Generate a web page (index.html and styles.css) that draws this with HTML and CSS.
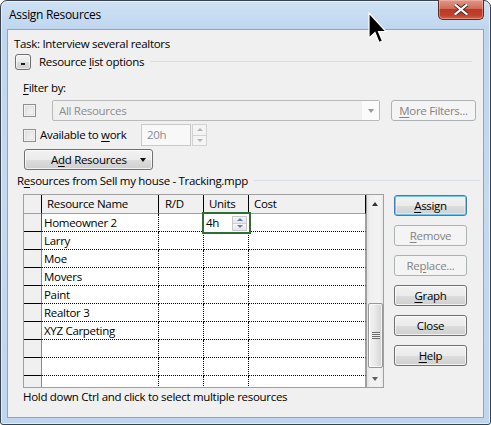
FILE: index.html
```html
<!DOCTYPE html>
<html>
<head>
<meta charset="utf-8">
<link rel="stylesheet" href="styles.css">
</head>
<body>
<div class="window">
  <div class="titlebar">
    <span class="title">Assign Resources</span>
    <div class="close-btn">
      <svg width="14" height="11" viewBox="0 0 14 11"><path d="M1.5 1 L12.5 10 M12.5 1 L1.5 10" stroke="#4a2320" stroke-width="4" stroke-linecap="square"/><path d="M1.5 1 L12.5 10 M12.5 1 L1.5 10" stroke="#ffffff" stroke-width="2.2" stroke-linecap="square"/></svg>
    </div>
  </div>
  <div class="client">
    <div class="task">Task: Interview several realtors</div>
    <div class="options-row">
      <span class="collapse-btn"><span class="minus"></span></span>
      <span class="options-label">Resource <u>l</u>ist options</span>
      <span class="rule"></span>
    </div>
    <div class="filter-label"><u>F</u>ilter by:</div>
    <div class="filter-row">
      <span class="checkbox"></span>
      <div class="combo"><span class="combo-text">All Resources</span><span class="combo-drop"><span class="tri-down gray"></span></span></div>
      <div class="btn disabled more-btn"><u>M</u>ore Filters...</div>
    </div>
    <div class="avail-row">
      <span class="checkbox"></span>
      <span class="avail-label">Available to <u>w</u>ork</span>
      <div class="spin-input">20h</div>
      <div class="spin-buttons"><span class="spin-half"><span class="tri-up light"></span></span><span class="spin-half"><span class="tri-down light"></span></span></div>
    </div>
    <div class="btn add-btn"><span class="add-text">A<u>d</u>d Resources</span><span class="tri-down dark"></span></div>
    <div class="resources-row"><span>R<u>e</u>sources from Sell my house - Tracking.mpp</span><span class="rule"></span></div>
    <div class="main-row">
      <div class="grid">
        <div class="sheet">
          <div class="row head">
            <div class="c rh"></div><div class="c name">Resource Name</div><div class="c rd">R/D</div><div class="c units">Units</div><div class="c cost">Cost</div>
          </div>
          <div class="row selected"><div class="c rh"></div><div class="c name">Homeowner 2</div><div class="c rd"></div><div class="c units"></div><div class="c cost"></div></div>
          <div class="row"><div class="c rh"></div><div class="c name">Larry</div><div class="c rd"></div><div class="c units"></div><div class="c cost"></div></div>
          <div class="row"><div class="c rh"></div><div class="c name">Moe</div><div class="c rd"></div><div class="c units"></div><div class="c cost"></div></div>
          <div class="row"><div class="c rh"></div><div class="c name">Movers</div><div class="c rd"></div><div class="c units"></div><div class="c cost"></div></div>
          <div class="row"><div class="c rh"></div><div class="c name">Paint</div><div class="c rd"></div><div class="c units"></div><div class="c cost"></div></div>
          <div class="row"><div class="c rh"></div><div class="c name">Realtor 3</div><div class="c rd"></div><div class="c units"></div><div class="c cost"></div></div>
          <div class="row"><div class="c rh"></div><div class="c name">XYZ Carpeting</div><div class="c rd"></div><div class="c units"></div><div class="c cost"></div></div>
          <div class="row"><div class="c rh"></div><div class="c name"></div><div class="c rd"></div><div class="c units"></div><div class="c cost"></div></div>
          <div class="row"><div class="c rh"></div><div class="c name"></div><div class="c rd"></div><div class="c units"></div><div class="c cost"></div></div>
          <div class="row"><div class="c rh"></div><div class="c name"></div><div class="c rd"></div><div class="c units"></div><div class="c cost"></div></div>
          <div class="cell-editor">
            <span class="editor-text">4h</span>
            <span class="editor-spin"><span class="es-half"><span class="tri-up blue"></span></span><span class="es-half"><span class="tri-down blue"></span></span></span>
          </div>
        </div>
        <div class="vscroll">
          <div class="sb-btn"><span class="tri-up dark"></span></div>
          <div class="sb-track"><div class="thumb"><span class="grip"></span></div></div>
          <div class="sb-btn"><span class="tri-down mid"></span></div>
        </div>
      </div>
      <div class="side-buttons">
        <div class="btn default"><u>A</u>ssign</div>
        <div class="btn disabled"><u>R</u>emove</div>
        <div class="btn disabled">Re<u>p</u>lace...</div>
        <div class="btn"><u>G</u>raph</div>
        <div class="btn">Close</div>
        <div class="btn"><u>H</u>elp</div>
      </div>
    </div>
    <div class="hint">Hold down Ctrl and click to select multiple resources</div>
  </div>
  <svg class="cursor" width="19" height="32" viewBox="0 0 19 32"><path d="M1 1 L1 26 L7 20.5 L11 30.5 L14.5 29 L10.5 19.5 L18 19.5 Z" fill="#000" stroke="#fff" stroke-width="1.2" stroke-linejoin="miter"/></svg>
</div>
</body>
</html>
```
FILE: styles.css
```css
* { box-sizing: border-box; }
html, body { margin: 0; padding: 0; }
body {
  width: 491px; height: 425px; overflow: hidden;
  font-family: "Open Sans", "Noto Sans", sans-serif;
  font-size: 11.5px; letter-spacing: -0.3px; color: #000; background: #fff;
}
u { text-decoration: underline; text-underline-offset: 2px; }

.window {
  position: relative;
  width: 491px; height: 425px;
  border: 1px solid #39424d;
  border-radius: 7px 7px 3px 3px;
  background: linear-gradient(to bottom, #cfe1f4 0px, #bed6ef 30px, #c4daf1 200px, #bfd6ef 425px);
  padding: 0 6px 6px 6px;
  display: flex; flex-direction: column;
  box-shadow: inset 0 0 0 1px rgba(255,255,255,0.55);
}
.titlebar {
  height: 28px; display: flex; align-items: flex-start;
}
.title { padding: 6px 0 0 2px; line-height: 16px; color: #000; font-size: 12px; }
.close-btn {
  margin-left: auto; margin-top: -1px;
  width: 46px; height: 20px;
  border: 1px solid #5a2a24; border-top: none;
  border-radius: 0 0 5px 5px;
  background: linear-gradient(to bottom, #e0998a 0%, #d06a56 45%, #bb3a25 50%, #c0402b 80%, #d26549 100%);
  box-shadow: inset 0 0 0 1px rgba(255,200,190,0.45);
  display: flex; align-items: center; justify-content: center;
}
.client {
  flex: 1;
  border: 1px solid #8fa4bd;
  background: #f0f0f0;
  padding: 0 6px;
  display: flex; flex-direction: column; align-items: flex-start;
}
.task { margin-top: 6px; line-height: 16px; }
.options-row {
  margin-top: 2px; height: 16px; width: 100%;
  display: flex; align-items: center;
}
.collapse-btn {
  margin-left: 1px; width: 16px; height: 16px;
  border: 1px solid #707070; border-radius: 3px;
  background: linear-gradient(to bottom, #f2f2f2 0%, #ebebeb 50%, #dddddd 51%, #cfcfcf 100%);
  box-shadow: inset 0 0 0 1px rgba(255,255,255,0.6);
  display: flex; justify-content: center; align-items: flex-end;
  padding-bottom: 4px;
}
.minus { width: 4px; height: 2px; background: #1e1e1e; }
.options-label { margin-left: 8px; line-height: 16px; white-space: nowrap; }
.rule { flex: 1; height: 1px; background: #d5dfe5; margin: 0 0 0 6px; }
.options-row .rule { margin-top: -2px; margin-right: 5px; }

.filter-label { margin: 10px 0 0 9px; line-height: 16px; }
.filter-row { margin: 4px 0 0 9px; display: flex; align-items: center; height: 21px; }
.checkbox {
  width: 13px; height: 13px; border: 1px solid #8e8f8f;
  background: linear-gradient(135deg, #dcdcdc, #fafafa);
  box-shadow: inset 0 0 0 1px #f3f3f3, inset 0 0 0 2px #e2e2e2;
  flex: none;
}
.combo {
  margin-left: 16px; width: 328px; height: 21px;
  border: 1px solid #b9b9b9; border-radius: 2px;
  background: #f0f0f0;
  display: flex; align-items: center;
}
.combo-text { padding-left: 6px; color: #8d8d8d; flex: 1; line-height: 16px; }
.combo-drop {
  width: 17px; height: 19px; background: #fbfbfb;
  display: flex; align-items: center; justify-content: center;
}
.btn {
  width: 74px; height: 21px;
  border: 1px solid #707070; border-radius: 3px;
  background: linear-gradient(to bottom, #f2f2f2 0%, #ebebeb 50%, #dddddd 51%, #cfcfcf 100%);
  box-shadow: inset 0 0 0 1px rgba(255,255,255,0.7);
  display: flex; align-items: center; justify-content: center;
  line-height: 16px; white-space: nowrap;
}
.btn.disabled {
  border-color: #adb2b5; background: #f4f4f4; color: #838383; box-shadow: none;
}
.btn.default {
  border-color: #3c7fb1;
  background: linear-gradient(to bottom, #f2f2f2 0%, #ebebeb 50%, #dddddd 51%, #cfcfcf 100%);
  box-shadow: inset 0 0 0 1px #6fc7f0, inset 0 0 0 2px rgba(255,255,255,0.4);
}
.more-btn { margin-left: 11px; width: 85px; }

.avail-row { margin: 3px 0 0 9px; display: flex; align-items: center; height: 22px; }
.avail-label { margin-left: 4px; width: 101px; line-height: 16px; white-space: nowrap; }
.spin-input {
  width: 50px; height: 22px; border: 1px solid #c9c9c9; background: #f8f8f8;
  color: #8d8d8d; padding-left: 5px; line-height: 20px;
}
.spin-buttons { margin-left: 1px; width: 15px; height: 22px; display: flex; flex-direction: column; }
.spin-half {
  flex: 1; border: 1px solid #d2d2d2; background: #f4f4f4;
  display: flex; align-items: center; justify-content: center;
}
.spin-half + .spin-half { border-top: none; }

.add-btn { margin: 3px 0 0 10px; width: 129px; position: relative; justify-content: flex-start; }
.add-text { margin-left: 26px; }
.add-btn .tri-down { position: absolute; right: 6px; top: 8px; }

.resources-row { margin: 3px 0 0 3px; width: 463px; display: flex; align-items: center; line-height: 16px; white-space: nowrap; }
.resources-row .rule { margin-top: -2px; }

.main-row { margin-top: 5px; display: flex; align-items: flex-start; }
.grid {
  margin-left: 9px; display: flex;
  border: 1px solid #a0a0a0; background: #fff;
}
.sheet { position: relative; width: 342px; height: 192px; overflow: hidden; }
.row { display: flex; height: 18px; }
.c { height: 18px; line-height: 17px; white-space: nowrap; overflow: hidden; flex: none; }
.rh { width: 18px; background: #f0f0f0; border-right: 1px solid #8a8a8a; border-bottom: 1px solid #000; }
.name { width: 117px; padding-left: 2px; border-right: 1px dotted #000; border-bottom: 1px dotted #000; }
.rd { width: 45px; border-right: 1px dotted #000; border-bottom: 1px dotted #000; }
.units { width: 45px; border-right: 1px dotted #000; border-bottom: 1px dotted #000; }
.cost { width: 117px; border-right: 1px solid #a0a0a0; border-bottom: 1px dotted #000; }
.row.head { height: 19px; }
.row.head .c {
  height: 19px; line-height: 18px; background: #f0f0f0;
  border-right: 1px solid #000; border-bottom: 1px solid #a0a0a0;
}
.row.head .name, .row.head .units, .row.head .cost { padding-left: 5px; }
.row.head .rd { padding-left: 6px; }
.row.selected .rh { border-right-color: #2f7032; }
.cell-editor {
  position: absolute; left: 178px; top: 17px; width: 49px; height: 22px;
  border: 2px solid #2f6e32; background: #fff;
  display: flex; align-items: center;
}
.editor-text { margin-left: 2px; line-height: 16px; }
.editor-spin {
  margin-left: auto; margin-right: 2px; width: 15px; height: 15px;
  display: flex; flex-direction: column; border: 1px solid #c8c8c8;
}
.es-half { flex: 1; display: flex; align-items: center; justify-content: center; background: linear-gradient(#f6f6f6, #e6e6e6); }
.es-half + .es-half { border-top: 1px solid #d0d0d0; }

.vscroll { width: 17px; height: 192px; display: flex; flex-direction: column; border-left: 1px solid #a0a0a0; background: linear-gradient(to right, #e3e3e3, #f0f0f0 20%, #f3f3f3 80%, #e8e8e8); }
.sb-btn { height: 17px; display: flex; align-items: center; justify-content: center; flex: none; }
.sb-track { flex: 1; }
.thumb {
  margin-top: 91px; height: 65px; width: 15px; margin-left: 1px;
  border: 1px solid #979797; border-radius: 2px;
  background: linear-gradient(to right, #f4f4f4, #e8e8e8 50%, #d3d3d3);
  box-shadow: inset 0 0 0 1px rgba(255,255,255,0.7);
  display: flex; align-items: center; justify-content: center;
}
.grip {
  width: 8px; height: 7px;
  background: repeating-linear-gradient(to bottom, #6b6b6b 0px, #6b6b6b 1px, #efefef 1px, #efefef 2px);
}

.side-buttons { margin: 1px 0 0 10px; display: flex; flex-direction: column; gap: 9px; }
.side-buttons .btn { width: 73px; }

.hint { margin: 1px 0 0 9px; line-height: 16px; }

.tri-down, .tri-up { width: 0; height: 0; border-left: 3.5px solid transparent; border-right: 3.5px solid transparent; }
.tri-down { border-top: 4px solid #000; }
.tri-up { border-bottom: 4px solid #000; }
.tri-down.gray { border-top-color: #9a9a9a; }
.tri-down.light { border-top-color: #b4b4b4; border-left-width: 3px; border-right-width: 3px; border-top-width: 3px; }
.tri-up.light { border-bottom-color: #b4b4b4; border-left-width: 3px; border-right-width: 3px; border-bottom-width: 3px; }
.tri-down.dark { border-top-color: #111; }
.tri-up.dark { border-bottom-color: #333; }
.tri-down.mid { border-top-color: #606060; }
.tri-up.blue { border-bottom-color: #5a7fc8; border-left-width: 3px; border-right-width: 3px; border-bottom-width: 3px; }
.tri-down.blue { border-top-color: #5a7fc8; border-left-width: 3px; border-right-width: 3px; border-top-width: 3px; }

.cursor { position: absolute; left: 367px; top: 11px; }
```
